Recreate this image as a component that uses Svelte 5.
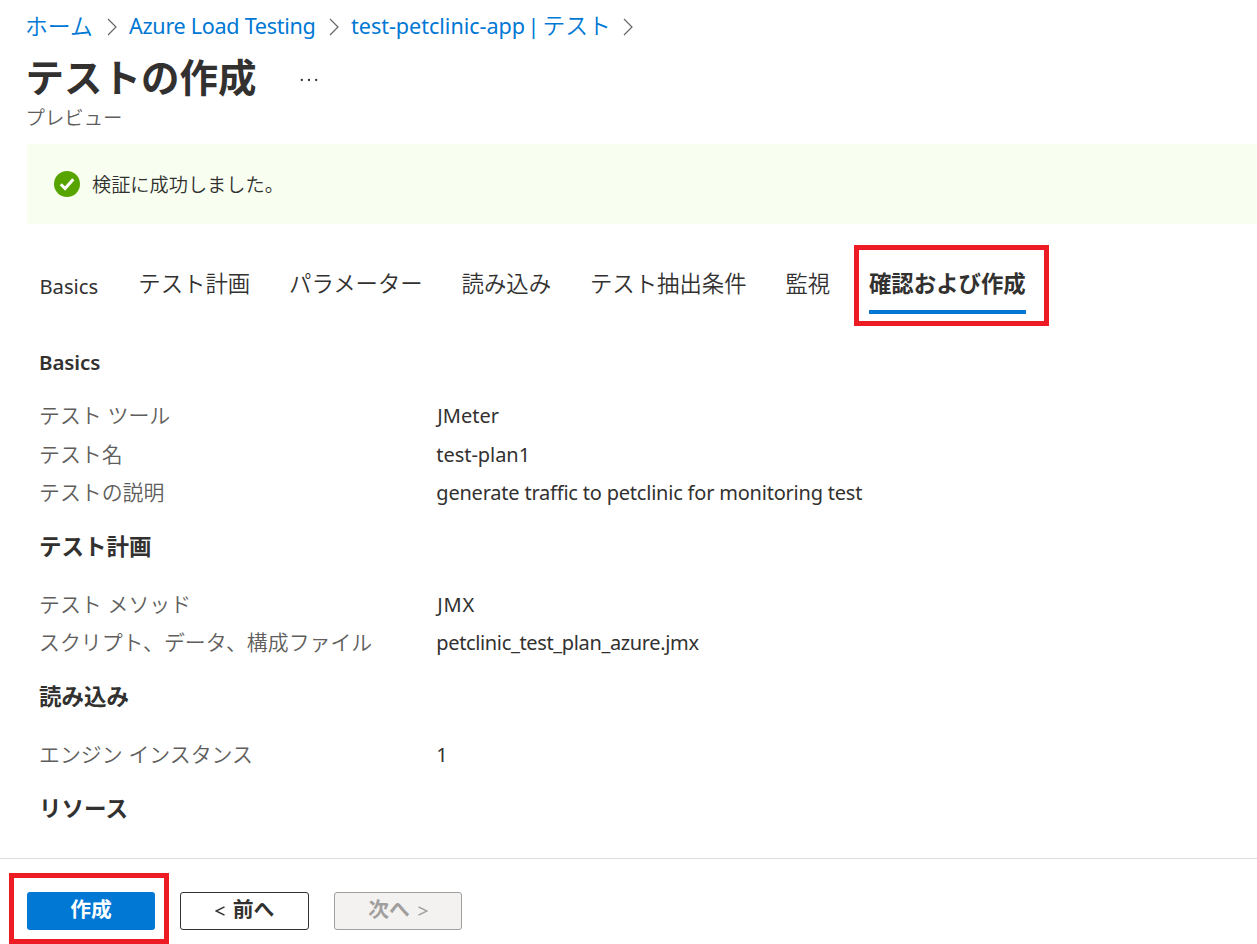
<script>
  const crumbs = [
    { parts: [{ t: 'ホーム' }], w: 67 },
    { parts: [{ t: 'Azure Load Testing', latin: true }], w: 186 },
    { parts: [{ t: 'test-petclinic-app |', latin: true, wide: true }, { t: 'テスト' }], w: 258 }
  ];
  const tabs = ['テスト計画', 'パラメーター', '読み込み', 'テスト抽出条件', '監視'];
  const sections = [
    {
      title: 'Basics',
      latin: true,
      rows: [
        ['テスト ツール', 'JMeter', 'cap'],
        ['テスト名', 'test-plan1', 'short'],
        ['テストの説明', 'generate traffic to petclinic for monitoring test', '']
      ]
    },
    {
      title: 'テスト計画',
      rows: [
        ['テスト メソッド', 'JMX', 'cap caps'],
        ['スクリプト、データ、構成ファイル', 'petclinic_test_plan_azure.jmx', 'file']
      ]
    },
    { title: '読み込み', rows: [['エンジン インスタンス', '1', 'short']] },
    { title: 'リソース', rows: [] }
  ];
</script>

<div class="page">
  <nav class="crumbs">
    {#each crumbs as c}
      <a class="crumb" href="#top" style="width: {c.w}px">
        {#each c.parts as p}<span class:latin={p.latin} class:jp={!p.latin} class:wide={p.wide}>{p.t}</span>{/each}
      </a>
      <svg class="chev" width="10" height="18" viewBox="0 0 10 18"><path d="M1 1l8 8-8 8" fill="none" stroke="#666" stroke-width="1.2" /></svg>
    {/each}
  </nav>
  <header class="title">
    <h1>テストの作成</h1>
    <svg width="18" height="4" viewBox="0 0 18 4" fill="#323130"><circle cx="1.8" cy="2" r="1.15" /><circle cx="9" cy="2" r="1.15" /><circle cx="16.2" cy="2" r="1.15" /></svg>
  </header>
  <div class="preview">プレビュー</div>
  <div class="banner">
    <svg width="26" height="26" viewBox="0 0 26 26"><circle cx="13" cy="13" r="13" fill="#57a300" /><path d="M6.8 13.2l4.300 4.300 8.200-9.300" fill="none" stroke="#fff" stroke-width="3" /></svg>
    <span>検証に成功しました。</span>
  </div>
  <div class="tabs">
    <div class="tab first"><span class="latin">Basics</span></div>
    {#each tabs as t}<div class="tab">{t}</div>{/each}
    <div class="tab active">確認および作成<i class="mark"></i></div>
  </div>
  <main>
    {#each sections as s}
      <section>
        <h2 class:basics={s.latin}>{s.title}</h2>
        {#each s.rows as [k, v, fit]}
          <div class="row"><span class="key">{k}</span><span class="val {fit}">{v}</span></div>
        {/each}
      </section>
    {/each}
  </main>
  <footer>
    <button class="primary">作成<i class="mark"></i></button>
    <button class="prev"><svg width="10" height="10" viewBox="0 0 10 10"><path d="M9.5 .8L1 5l8.500 4.200" /></svg>前へ</button>
    <button class="next" disabled>次へ<svg width="10" height="10" viewBox="0 0 10 10"><path d="M.5 .8L9 5L.5 9.200" /></svg></button>
  </footer>
</div>

<style>
  :global(body) { margin: 0; background: #fff; overflow: hidden; }
  .page {
    width: 1257px; height: 944px; overflow: hidden; box-sizing: border-box;
    display: flex; flex-direction: column;
    font-family: "Noto Sans CJK JP", sans-serif; color: #323130; background: #fff;
  }
  .latin, .val, .basics { font-family: "Noto Sans", sans-serif; }
  .crumbs { display: flex; align-items: center; height: 52px; padding-left: 26px; flex: none; }
  .crumb { display: flex; gap: 4px; color: #0078d4; font-size: 22.8px; line-height: 52px; white-space: nowrap; text-decoration: none; font-weight: 350; }
  .crumb .jp { line-height: 50px; margin-left: -1px; }
  .crumb .latin { font-size: 21.6px; font-weight: 400; letter-spacing: -0.3px; }
  .crumb .wide { letter-spacing: -0.04px; word-spacing: -3px; }
  .chev { margin: 2px 12px 0 14px; flex: none; }
  .title { display: flex; align-items: center; height: 52px; padding-left: 25.5px; flex: none; }
  h1 { margin: 0; width: 274px; font-size: 38.5px; line-height: 46px; height: 52px; font-weight: 700; }
  .title svg { margin-top: 4px; }
  .preview { height: 40px; line-height: 26px; padding-left: 25.5px; font-size: 19.4px; font-weight: 350; color: #605e5c; flex: none; }
  .banner {
    display: flex; align-items: center; gap: 12px; flex: none; height: 80px; margin-left: 27px; padding-left: 27px;
    box-sizing: border-box; background: #f8fff0; border-radius: 3px 0 0 3px; font-size: 19.2px; font-weight: 350;
  }
  .tabs { display: flex; gap: 38.8px; height: 104px; padding: 21px 0 0 39.5px; box-sizing: border-box; flex: none; }
  .tab { position: relative; height: 69px; line-height: 74px; font-size: 22.4px; font-weight: 350; white-space: nowrap; box-sizing: border-box; }
  .first { width: 60px; line-height: 78px; }
  .first .latin { font-size: 20.2px; font-weight: 400; }
  .active { font-weight: 700; border-bottom: 4px solid #0078d4; }
  .mark { position: absolute; border: 5px solid #ed1c24; box-sizing: border-box; }
  .active .mark { left: -15px; top: 0; width: 195px; height: 81px; }
  main { padding-left: 39px; flex: 1; min-height: 0; }
  h2 { margin: 0 0 4px; height: 69px; line-height: 65px; font-size: 22.5px; font-weight: 700; }
  h2.basics { font-size: 20.5px; line-height: 68px; font-weight: 600; margin: 0; letter-spacing: -0.1px; }
  .row { display: grid; grid-template-columns: 397.300px 1fr; height: 38.6px; line-height: 38.6px; white-space: nowrap; }
  .key { font-size: 20.9px; line-height: 35.6px; font-weight: 350; color: #605e5c; word-spacing: 1.2px; }
  .val { font-size: 20px; letter-spacing: -0.21px; }
  .val.short { letter-spacing: -0.05px; }
  .val.cap { letter-spacing: 0; padding-left: 1px; }
  .val.caps { letter-spacing: 0.8px; }
  .val.file { letter-spacing: -0.36px; }
  footer { display: flex; height: 86px; padding: 33px 0 0 27px; box-sizing: border-box; border-top: 1px solid #dcdcdc; flex: none; background: #fff; }
  button {
    position: relative; display: flex; align-items: center; justify-content: center; gap: 8px; height: 38px; padding: 0 0 5px;
    box-sizing: border-box; font-family: inherit; font-size: 20.8px; line-height: 1; font-weight: 700; border-radius: 3px;
  }
  button path { fill: none; stroke: currentColor; stroke-width: 1.5; }
  button svg { margin-top: 5px; }
  .primary { width: 128px; background: #0078d4; border: 0; color: #fff; margin-right: 25px; }
  .primary .mark { left: -18px; top: -19px; width: 160px; height: 71px; }
  .prev { width: 129px; background: #fff; border: 1px solid #323130; color: #323130; margin-right: 25px; }
  .next { width: 128px; background: #f3f2f1; border: 1px solid #a19f9d; color: #a19f9d; }
</style>
